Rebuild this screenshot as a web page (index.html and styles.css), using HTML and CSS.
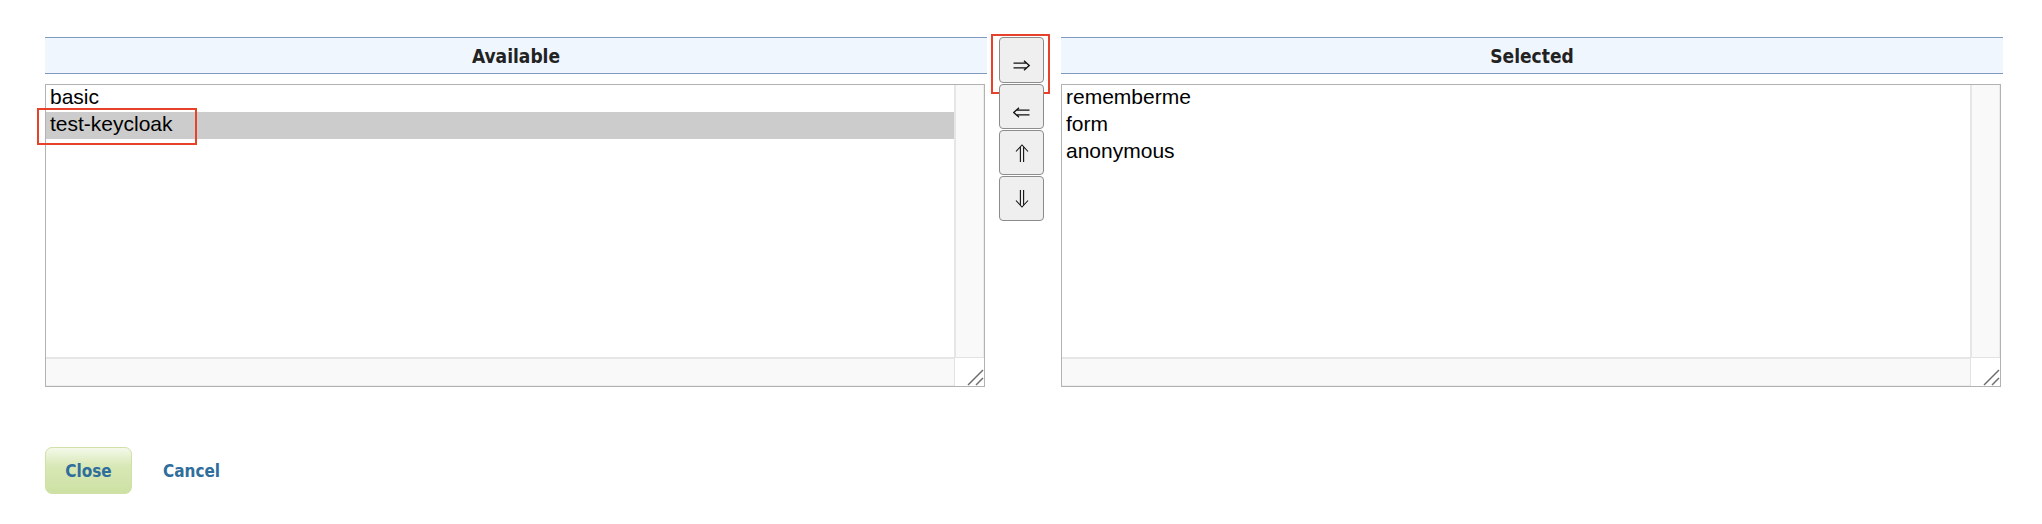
FILE: index.html
```html
<!DOCTYPE html>
<html>
<head>
<meta charset="utf-8">
<title>Picker</title>
<link rel="stylesheet" href="styles.css">
</head>
<body>
<div class="page">
  <div class="picker">
    <div class="col">
      <div class="col-header">Available</div>
      <div class="listbox">
        <div class="options">
          <div class="option">basic</div>
          <div class="option selected">test-keycloak<span class="mark mark-option"></span></div>
        </div>
        <div class="vtrack"></div>
        <div class="htrack"></div>
        <div class="corner">
          <svg width="29" height="29" viewBox="0 0 29 29"><path d="M13 28 L28 13 M21 28 L28 21" stroke="#6f6f6f" stroke-width="1.5" fill="none"/></svg>
        </div>
      </div>
    </div>

    <div class="mid">
      <button class="move h first" type="button">
        <svg width="17" height="11" viewBox="0 0 17 11"><path d="M0.5 3.2 H14 M0.5 7.8 H14 M11 0.8 L16.2 5.5 L11 10.2" stroke="#111" stroke-width="1.3" fill="none"/></svg>
        <span class="mark mark-btn"></span>
      </button>
      <button class="move h" type="button">
        <svg width="17" height="11" viewBox="0 0 17 11"><path d="M16.5 3.2 H3 M16.5 7.8 H3 M6 0.8 L0.8 5.5 L6 10.2" stroke="#111" stroke-width="1.3" fill="none"/></svg>
      </button>
      <button class="move v" type="button">
        <svg width="14" height="18" viewBox="0 0 14 18"><path d="M1 7.5 L7 1 L13 7.5 M5.4 3.2 V18 M8.6 3.2 V18" stroke="#111" stroke-width="1.1" fill="none"/></svg>
      </button>
      <button class="move v" type="button">
        <svg width="14" height="18" viewBox="0 0 14 18"><path d="M1 10.5 L7 17 L13 10.5 M5.4 14.8 V0 M8.6 14.8 V0" stroke="#111" stroke-width="1.1" fill="none"/></svg>
      </button>
    </div>

    <div class="col">
      <div class="col-header">Selected</div>
      <div class="listbox">
        <div class="options">
          <div class="option">rememberme</div>
          <div class="option">form</div>
          <div class="option">anonymous</div>
        </div>
        <div class="vtrack"></div>
        <div class="htrack"></div>
        <div class="corner">
          <svg width="29" height="29" viewBox="0 0 29 29"><path d="M13 28 L28 13 M21 28 L28 21" stroke="#6f6f6f" stroke-width="1.5" fill="none"/></svg>
        </div>
      </div>
    </div>
  </div>

  <div class="actions">
    <button class="btn-close" type="button">Close</button>
    <a class="link-cancel" href="#">Cancel</a>
  </div>
</div>
</body>
</html>
```

FILE: styles.css
```css
html, body {
  margin: 0;
  padding: 0;
  background: #ffffff;
}

.page {
  padding: 37px 0 0 45px;
  font-family: "Liberation Sans", Arial, sans-serif;
}

.picker {
  display: flex;
  align-items: flex-start;
}

.col {
  width: 942px;
  display: flex;
  flex-direction: column;
}

.col-header {
  height: 35px;
  border-top: 1px solid #7f9bbf;
  border-bottom: 1px solid #7f9bbf;
  background: #eff6fe;
  display: flex;
  align-items: center;
  justify-content: center;
  font-family: "DejaVu Sans Condensed", "DejaVu Sans", Verdana, sans-serif;
  font-stretch: condensed;
  font-weight: bold;
  font-size: 19px;
  color: #222222;
}

.listbox {
  margin-top: 10px;
  width: 940px;
  height: 303px;
  box-sizing: border-box;
  border: 1px solid #b2b2b2;
  display: grid;
  grid-template-columns: 1fr 30px;
  grid-template-rows: 1fr 29px;
  background: #ffffff;
}

.options {
  grid-column: 1;
  grid-row: 1;
  display: flex;
  flex-direction: column;
}

.option {
  position: relative;
  height: 27px;
  line-height: 23px;
  padding-left: 4px;
  font-size: 21px;
  color: #000;
  white-space: nowrap;
}

.option.selected {
  background: #cccccc;
}

.vtrack {
  grid-column: 2;
  grid-row: 1;
  background: #f9f9f9;
  border-left: 2px solid #e6e6e6;
  border-right: 1px solid #ececec;
}

.htrack {
  grid-column: 1;
  grid-row: 2;
  background: #f9f9f9;
  border-top: 2px solid #e6e6e6;
  border-bottom: 1px solid #ececec;
}

.corner {
  grid-column: 2;
  grid-row: 2;
  background: #ffffff;
  border-left: 1px solid #e3e3e3;
  border-top: 1px solid #e3e3e3;
  display: flex;
  align-items: flex-end;
  justify-content: flex-end;
  overflow: hidden;
}

.corner svg {
  display: block;
}

.mid {
  width: 74px;
  display: flex;
  flex-direction: column;
  gap: 1px;
  padding-left: 12px;
  box-sizing: border-box;
}

.move {
  position: relative;
  width: 45px;
  height: 45px;
  margin: 0;
  padding: 0;
  border: 1px solid #8c8c8c;
  border-radius: 4px;
  background: #efefef;
  display: flex;
  align-items: center;
  justify-content: center;
  cursor: pointer;
}

.move.first {
  height: 46px;
}

.move.h svg {
  margin-top: 11px;
}

.move svg {
  display: block;
}

.mark {
  position: absolute;
  border: 2px solid #e5412b;
  box-sizing: border-box;
  pointer-events: none;
}

.mark-option {
  left: -9px;
  top: -4px;
  width: 160px;
  height: 37px;
}

.mark-btn {
  left: -9px;
  top: -4px;
  width: 59px;
  height: 60px;
}

.actions {
  margin-top: 60px;
  display: flex;
  align-items: center;
  gap: 31px;
}

.btn-close {
  width: 87px;
  height: 47px;
  border: 1px solid #cfe0a8;
  border-radius: 7px;
  background: linear-gradient(to bottom, #f4f9ea 0%, #d8e8b6 40%, #cde1a3 100%);
  font-family: "DejaVu Sans Condensed", "DejaVu Sans", Verdana, sans-serif;
  font-stretch: condensed;
  font-weight: bold;
  font-size: 17px;
  color: #2e6d9c;
  padding: 0;
  cursor: pointer;
}

.link-cancel {
  font-family: "DejaVu Sans Condensed", "DejaVu Sans", Verdana, sans-serif;
  font-stretch: condensed;
  font-weight: bold;
  font-size: 17px;
  color: #2e6d9c;
  text-decoration: none;
}
```
